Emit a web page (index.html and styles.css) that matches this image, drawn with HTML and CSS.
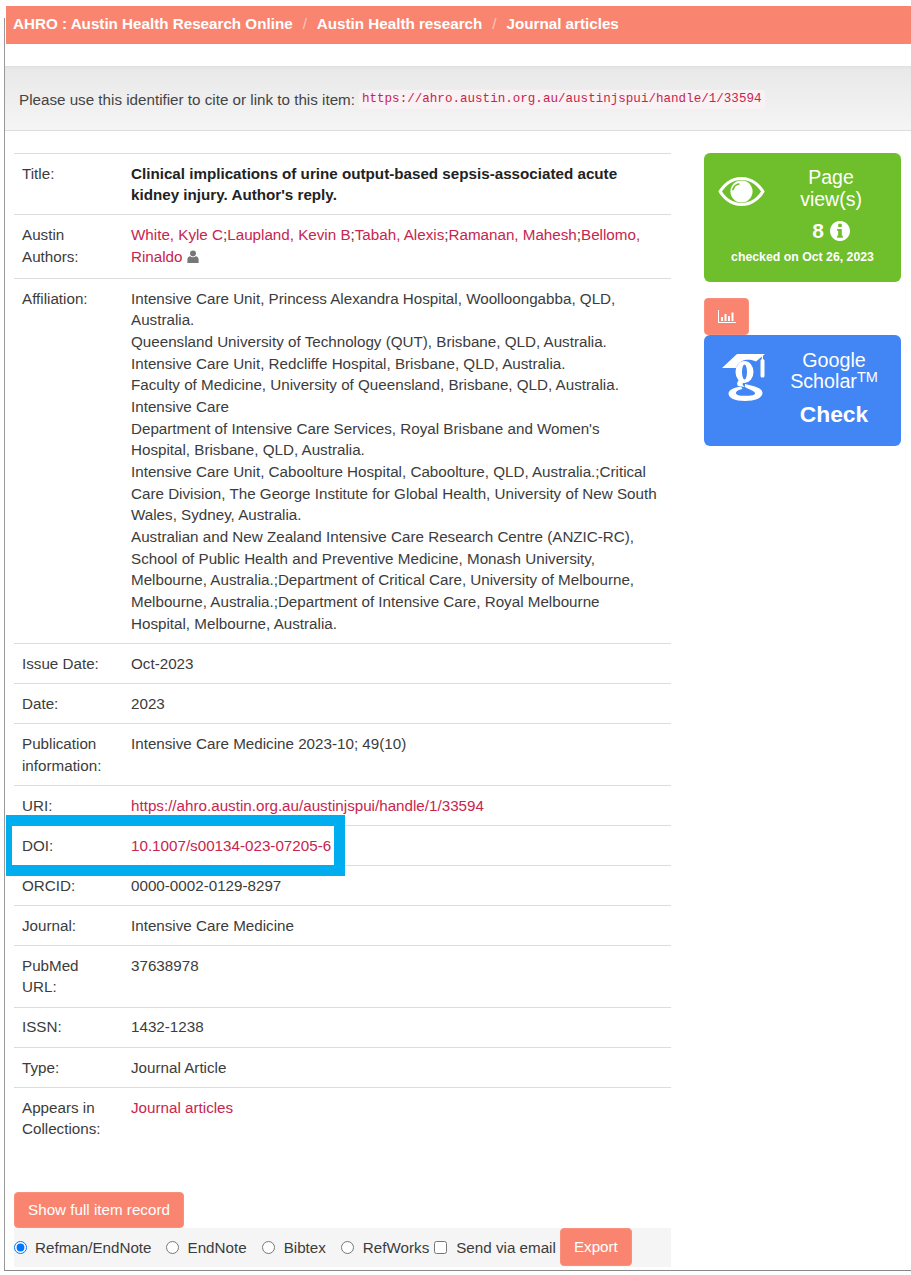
FILE: index.html
```html
<!DOCTYPE html>
<html lang="en">
<head>
<meta charset="utf-8">
<title>Clinical implications of urine output-based sepsis-associated acute kidney injury</title>
<link rel="stylesheet" href="styles.css">
</head>
<body>
<div class="page">
  <nav class="crumbs">
    <a href="#">AHRO : Austin Health Research Online</a><span class="sep">/</span><a href="#">Austin Health research</a><span class="sep">/</span><a href="#">Journal articles</a>
  </nav>
  <div class="cite">
    <span>Please use this identifier to cite or link to this item:</span>
    <code class="cite-code">https://ahro.austin.org.au/austinjspui/handle/1/33594</code>
  </div>
  <div class="main">
    <div class="left">
      <div class="record">
        <div class="row row-title"><div class="label">Title:</div><div class="value strong">Clinical implications of urine output-based sepsis-associated acute kidney injury. Author's reply.</div></div>
        <div class="row row-authors"><div class="label">Austin Authors:</div><div class="value"><a href="#">White, Kyle C</a>;<a href="#">Laupland, Kevin B</a>;<a href="#">Tabah, Alexis</a>;<a href="#">Ramanan, Mahesh</a>;<a href="#">Bellomo, Rinaldo</a>
          <svg class="user" viewBox="0 0 12 13" aria-hidden="true"><circle cx="6" cy="3.4" r="3"/><path d="M0.4 13V9.6C0.4 7.6 1.6 6.4 3.2 6.3 4 7 5 7.3 6 7.3S8 7 8.8 6.3C10.4 6.4 11.6 7.6 11.6 9.6V13Z"/></svg></div></div>
        <div class="row"><div class="label">Affiliation:</div><div class="value">Intensive Care Unit, Princess Alexandra Hospital, Woolloongabba, QLD, Australia.<br>Queensland University of Technology (QUT), Brisbane, QLD, Australia.<br>Intensive Care Unit, Redcliffe Hospital, Brisbane, QLD, Australia.<br>Faculty of Medicine, University of Queensland, Brisbane, QLD, Australia.<br>Intensive Care<br>Department of Intensive Care Services, Royal Brisbane and Women's Hospital, Brisbane, QLD, Australia.<br>Intensive Care Unit, Caboolture Hospital, Caboolture, QLD, Australia.;Critical Care Division, The George Institute for Global Health, University of New South Wales, Sydney, Australia.<br>Australian and New Zealand Intensive Care Research Centre (ANZIC-RC), School of Public Health and Preventive Medicine, Monash University, Melbourne, Australia.;Department of Critical Care, University of Melbourne, Melbourne, Australia.;Department of Intensive Care, Royal Melbourne Hospital, Melbourne, Australia.</div></div>
        <div class="row"><div class="label">Issue Date:</div><div class="value">Oct-2023</div></div>
        <div class="row"><div class="label">Date:</div><div class="value">2023</div></div>
        <div class="row"><div class="label">Publication information:</div><div class="value">Intensive Care Medicine 2023-10; 49(10)</div></div>
        <div class="row"><div class="label">URI:</div><div class="value"><a href="#">https://ahro.austin.org.au/austinjspui/handle/1/33594</a></div></div>
        <div class="row row-doi"><div class="label">DOI:</div><div class="value"><a href="#">10.1007/s00134-023-07205-6</a></div><div class="highlight"></div></div>
        <div class="row"><div class="label">ORCID:</div><div class="value">0000-0002-0129-8297</div></div>
        <div class="row"><div class="label">Journal:</div><div class="value">Intensive Care Medicine</div></div>
        <div class="row"><div class="label">PubMed URL:</div><div class="value">37638978</div></div>
        <div class="row"><div class="label">ISSN:</div><div class="value">1432-1238</div></div>
        <div class="row"><div class="label">Type:</div><div class="value">Journal Article</div></div>
        <div class="row"><div class="label">Appears in Collections:</div><div class="value"><a href="#">Journal articles</a></div></div>
      </div>
      <a class="btn btn-full" href="#">Show full item record</a>
      <form class="export">
        <label class="opt opt-first"><input type="radio" name="fmt" checked> Refman/EndNote</label>
        <label class="opt"><input type="radio" name="fmt"> EndNote</label>
        <label class="opt"><input type="radio" name="fmt"> Bibtex</label>
        <label class="opt opt-last"><input type="radio" name="fmt"> RefWorks</label>
        <label class="opt opt-mail"><input type="checkbox"> Send via email</label>
        <button class="btn btn-export" type="button">Export</button>
      </form>
    </div>
    <aside class="side">
      <div class="card card-green">
        <svg class="eye" viewBox="0 0 48 30" aria-hidden="true"><path fill-rule="evenodd" d="M24 0C36 0 44 8 48 15 44 22 36 30 24 30S4 22 0 15C4 8 12 0 24 0ZM24 3.200C14 3.200 7.400 9.600 3.800 15 7.400 20.400 14 26.800 24 26.800S40.600 20.400 44.200 15C40.600 9.600 34 3.200 24 3.200Z"/><path fill-rule="evenodd" d="M24 3.500A11.500 11.500 0 1 1 23.990 3.500ZM21.500 6.500C17.500 7 14.500 10 14.300 14 15.500 14 16.300 13.200 16.500 12.200 17 9.800 19 8.300 21.500 8 22.300 7.900 22.300 6.500 21.500 6.500Z"/></svg>
        <div class="card-title">Page view(s)</div>
        <div class="count">8 <svg class="info" viewBox="0 0 20 20" aria-hidden="true"><path fill-rule="evenodd" d="M10 0A10 10 0 1 1 9.990 0ZM8.200 2.800V6H11.800V2.800ZM7.200 8V10H8.200V14.500H7.200V16.800H12.800V14.500H11.800V8Z"/></svg></div>
        <div class="checked">checked on Oct 26, 2023</div>
      </div>
      <a class="btn btn-stats" href="#" aria-label="Statistics"><svg viewBox="0 0 18 13" aria-hidden="true"><path d="M0 0H1V12H18V13H0ZM3 7H5V11H3ZM6.500 4H8.500V11H6.500ZM10 6H12V11H10ZM13.500 2.500H15.500V11H13.500Z"/></svg></a>
      <div class="card card-blue">
        <svg class="gs" viewBox="0 0 44 50" aria-hidden="true">
          <path d="M0 15 15 1H43L34 8.500C30 6.500 24 6 20 8 16 10 14.500 13 14.500 15Z"/>
          <path fill-rule="evenodd" d="M13.500 19a9 11 0 1 0 18 0a9 11 0 1 0-18 0ZM20 19a2.500 7.500 0 1 0 5 0a2.500 7.500 0 1 0-5 0Z"/>
          <path d="M17 27C15 29 14.500 31 16 33L23 34C20 32 20 30.500 22 29.500Z"/>
          <path d="M23 31C31 33 40.500 34.500 40.500 40 40.500 45 33 48 23 48 12.500 48 6.500 45 6.500 40.500 6.500 37 12 34.500 19 33.500L20.500 36C17 36.800 14 38 14 40 14 42 17 42.800 23 42.800 29.500 42.800 33 42 33 40.500 33 38 27 36.500 23 34Z"/>
          <path d="M39.800 1H41V6C42 6.500 42.500 7 42.500 8V23C42.500 25 38.500 25 38.500 23V8C38.500 7 39 6.500 39.800 6Z"/>
        </svg>
        <div class="gs-text">
          <div class="gs-name">Google Scholar<sup>TM</sup></div>
          <div class="gs-check">Check</div>
        </div>
      </div>
    </aside>
  </div>
  <div class="rule"></div>
</div>
</body>
</html>
```
FILE: styles.css
```css
* { box-sizing: border-box; }
html, body { margin: 0; padding: 0; background: #fff; }
body {
  font-family: "Liberation Sans", Arial, sans-serif;
  font-size: 15.2px;
  line-height: 21.67px;
  color: #3c3c3c;
}
a { color: #c7254e; text-decoration: none; }
.page { position: relative; width: 911px; height: 1275px; padding: 6px 0 0 5px; overflow: hidden; }
.page::before {
  content: ""; position: absolute; left: 4px; top: 18px; bottom: 5px; width: 1px; background: #999;
}
.crumbs {
  height: 38px; margin-left: 1px; padding: 0 7px 2px; display: flex; align-items: center;
  background: #f98570; color: #fff; font-weight: 700;
}
.crumbs a { color: #fff; }
.crumbs .sep { margin: 0 10px; font-weight: 400; color: #fbc4ba; }
.cite {
  margin-top: 22px; height: 65px; padding: 3px 14px 0; display: flex; align-items: center; gap: 4px;
  background: linear-gradient(#e8e8e8, #f5f5f5);
  border-bottom: 1px solid #ddd;
  color: #444;
  box-shadow: inset 0 3px 3px -2px #ddd;
}
.cite-code {
  font-family: "Liberation Mono", monospace; font-size: 12.57px; line-height: 17px;
  color: #c7254e; background: #f9f2f4; padding: 1px 3px; border-radius: 4px;
}
.main { display: flex; align-items: flex-start; margin-top: 22px; }
.left { width: 657px; margin-left: 9px; }
.record { height: 1039px; }
.row { position: relative; display: flex; border-top: 1px solid #ddd; padding: 8.7px 8px; }
.row-title { padding-bottom: 8.2px; }
.row-authors { padding-bottom: 10.7px; }
.row-doi { z-index: 1; }
.label { width: 109px; flex: none; padding-right: 20px; }
.value { flex: 1; padding-right: 3px; }
.strong { font-weight: 700; color: #222; }
.user { width: 12px; height: 13px; fill: #777; vertical-align: -1px; }
.highlight {
  position: absolute; left: -8px; top: -11px; width: 339px; height: 61px;
  border: solid #00aeef; border-width: 11px 11px 11px 6px;
}
.btn {
  display: inline-flex; align-items: center; justify-content: center;
  background: #f98570; color: #fff; border: 1px solid #fa8f7c; border-radius: 4px;
  font: 15.2px/20px "Liberation Sans", Arial, sans-serif;
}
.btn-full { width: 170px; height: 36px; }
.export {
  height: 39px; background: #f5f5f5; display: flex; align-items: center;
}
.opt { display: flex; align-items: center; gap: 9px; margin-right: 15px; white-space: nowrap; }
.opt input { margin: 0; width: 13px; height: 13px; }
.opt-first { gap: 8px; margin-right: 14px; }
.opt-last { margin-right: 5px; }
.opt-mail { margin-right: 4px; }
.btn-export { width: 72px; height: 38px; margin-top: -1px; }
.side { width: 197px; margin-left: 33px; flex: none; }
.card { border-radius: 6px; color: #fff; }
.card-green { position: relative; height: 129px; background: #6fbe2b; padding: 13px 0 0 87px; text-align: center; }
.eye { position: absolute; left: 14px; top: 24px; width: 47px; height: 29px; fill: #fff; }
.card-title { font-size: 19.5px; line-height: 22px; width: 80px; }
.count { font-size: 21px; font-weight: 700; line-height: 24px; margin-top: 9px; width: 80px; }
.info { width: 20px; height: 20px; fill: #fff; vertical-align: -3px; }
.checked { position: absolute; left: 0; right: 0; top: 95px; font-size: 12.3px; font-weight: 700; line-height: 18px; text-align: center; }
.btn-stats { width: 45px; height: 37px; margin-top: 16px; display: flex; }
.btn-stats svg { width: 18px; height: 13px; fill: #fff; }
.card-blue { height: 111px; background: #4285f4; display: flex; padding: 18px 0 0 18px; }
.gs { width: 44px; height: 50px; fill: #fff; flex: none; }
.gs-text { margin-left: 18px; width: 100px; text-align: center; }
.gs-name { font-size: 19.7px; line-height: 21px; margin-top: -3px; }
.gs-name sup { font-size: 14.5px; line-height: 0; vertical-align: 6px; }
.gs-check { font-size: 22.8px; font-weight: 700; line-height: 24px; margin-top: 10px; }
.rule { position: absolute; left: 4px; right: 0; top: 1270px; height: 1px; background: #888; }
```
